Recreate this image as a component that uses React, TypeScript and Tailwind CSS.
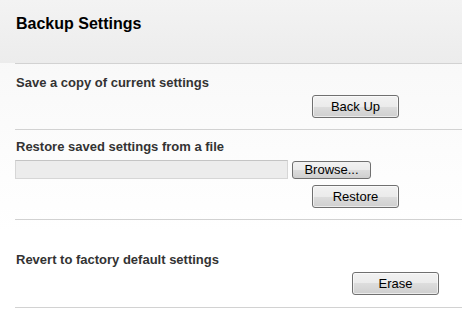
const btn =
  "h-[23px] rounded-[3px] border border-[#707070] bg-[linear-gradient(#f2f2f2_0%,#ebebeb_50%,#dddddd_50%,#cfcfcf_100%)] text-[13px] leading-none text-black shadow-[inset_0_0_0_1px_rgba(255,255,255,0.6)]";

export default function App() {
  return (
    <div className="w-[462px] h-[309px] overflow-hidden bg-[linear-gradient(#f6f6f6,#fbfbfb_40%,#ffffff_75%)] font-['Liberation_Sans',Arial,sans-serif]">
      <div className="h-[63px] bg-[linear-gradient(#f3f3f3,#ececec)] pl-4 pt-[14px]">
        <h1 className="text-[16px] leading-[20px] font-bold text-black">Backup Settings</h1>
      </div>

      <section className="ml-[15px] border-t border-[#d2d2d2] pt-[11px] pb-[11px]">
        <p className="pl-px text-[13px] leading-4 font-bold text-[#333333]">Save a copy of current settings</p>
        <div className="mt-[4px] flex pl-[297px]">
          <button className={`${btn} w-[87px]`}>Back Up</button>
        </div>
      </section>

      <section className="ml-[15px] border-t border-[#d2d2d2] pt-[9px] pb-[11px]">
        <p className="pl-px text-[13px] leading-4 font-bold text-[#333333]">Restore saved settings from a file</p>
        <div className="mt-[5px] flex items-center gap-[4px]">
          <div className="h-[19px] w-[273px] border border-[#d6d6d6] border-t-[#c4c4c4] bg-[#ececec]" />
          <button className="h-[18px] w-[79px] rounded-[3px] border border-[#707070] bg-[linear-gradient(#f2f2f2_0%,#ebebeb_50%,#dddddd_50%,#cfcfcf_100%)] text-[13px] leading-none text-black">
            Browse...
          </button>
        </div>
        <div className="mt-[6px] flex pl-[297px]">
          <button className={`${btn} w-[87px] border-[#4f9bcb] shadow-[inset_0_0_0_1px_rgba(170,220,245,0.95)]`}>Restore</button>
        </div>
      </section>

      <section className="ml-[15px] border-t border-[#d2d2d2] pt-[32px] pb-[12px]">
        <p className="pl-px text-[13px] leading-4 font-bold text-[#333333]">Revert to factory default settings</p>
        <div className="mt-[4px] flex pl-[337px]">
          <button className={`${btn} w-[87px]`}>Erase</button>
        </div>
      </section>
      <div className="ml-[15px] border-t border-[#d2d2d2]" />
    </div>
  );
}
